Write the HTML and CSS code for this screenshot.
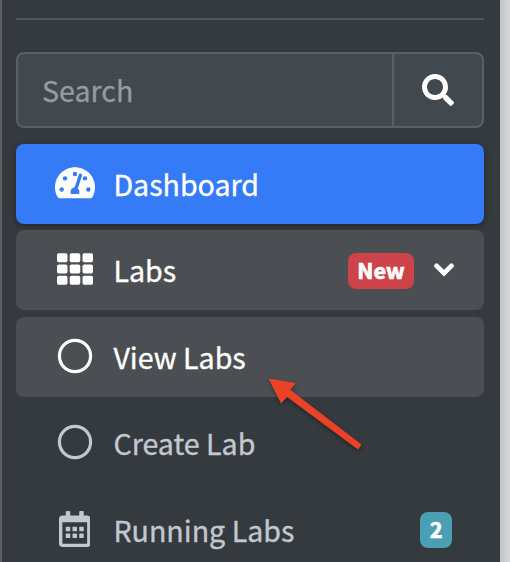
FILE: index.html
```html
<!DOCTYPE html>
<html lang="en">
<head>
<meta charset="utf-8">
<title>Dashboard</title>
<link rel="stylesheet" href="styles.css">
</head>
<body>
<aside class="sidebar">
  <hr class="divider">
  <form class="search">
    <input class="search-input" type="text" placeholder="Search" aria-label="Search">
    <button class="search-button" type="button" aria-label="Submit search">
      <svg width="32" height="32" viewBox="0 0 512 512" fill="#fff"><path d="M505 442.7L405.3 343c-4.5-4.5-10.6-7-17-7H372c27.6-35.3 44-79.7 44-128C416 93.1 322.9 0 208 0S0 93.1 0 208s93.1 208 208 208c48.3 0 92.7-16.4 128-44v16.3c0 6.4 2.5 12.5 7 17l99.7 99.7c9.4 9.4 24.6 9.4 33.9 0l28.3-28.3c9.4-9.4 9.4-24.6.1-34zM208 336c-70.7 0-128-57.2-128-128 0-70.7 57.2-128 128-128 70.7 0 128 57.2 128 128 0 70.7-57.2 128-128 128z"/></svg>
    </button>
  </form>
  <nav class="menu">
    <a class="item active">
      <span class="icon"><svg width="40" height="35.6" viewBox="0 0 576 512"><path fill="#fff" d="M288 32C129 32 0 161 0 320c0 53 14 102 39 145 6 9 16 15 27 15h444c11 0 21-6 27-15 25-43 39-92 39-145C576 161 447 32 288 32z"/><g fill="#357af6"><circle cx="96" cy="352" r="32"/><circle cx="144" cy="192" r="32"/><circle cx="288" cy="128" r="32"/><circle cx="432" cy="192" r="32"/><circle cx="480" cy="352" r="32"/><path d="M233 416c-6-9-9-20-9-32 0-34 26-61 59-64l60-181c10-29 54-15 46 15l-61 183c15 12 24 29 24 47 0 12-3 23-9 32z"/></g></svg></span>
      <span class="label">Dashboard</span>
    </a>
    <a class="item open">
      <span class="icon"><svg width="36" height="36" viewBox="0 0 512 512" fill="#fff"><rect y="32" width="149" height="128" rx="24"/><rect x="181" y="32" width="150" height="128" rx="24"/><rect x="363" y="32" width="149" height="128" rx="24"/><rect y="192" width="149" height="128" rx="24"/><rect x="181" y="192" width="150" height="128" rx="24"/><rect x="363" y="192" width="149" height="128" rx="24"/><rect y="352" width="149" height="128" rx="24"/><rect x="181" y="352" width="150" height="128" rx="24"/><rect x="363" y="352" width="149" height="128" rx="24"/></svg></span>
      <span class="label">Labs</span>
      <span class="badge new">New</span>
      <svg class="chevron" width="20" height="14" viewBox="0 0 20 14" fill="none" stroke="#fff" stroke-width="4.8" stroke-linecap="round" stroke-linejoin="miter"><path d="M2.6 2.9L10 10.1L17.4 2.9"/></svg>
    </a>
    <a class="item open view">
      <span class="icon"><svg width="36" height="36" viewBox="0 0 36 36"><circle cx="18" cy="18" r="15.6" fill="none" stroke="currentColor" stroke-width="3.2"/></svg></span>
      <span class="label">View Labs</span>
      <svg class="arrow" width="104" height="84" viewBox="0 0 104 84"><path fill="#eb4126" d="M4.5 5.5L31.5 10L26.5 17L97.5 71.5L94 76.5L23 24L17 30.5Z"/></svg>
    </a>
    <a class="item create">
      <span class="icon"><svg width="36" height="36" viewBox="0 0 36 36"><circle cx="18" cy="18" r="15.6" fill="none" stroke="currentColor" stroke-width="3.2"/></svg></span>
      <span class="label">Create Lab</span>
    </a>
    <a class="item running">
      <span class="icon"><svg width="31.5" height="36" viewBox="0 0 448 512" fill="currentColor"><path fill-rule="evenodd" d="M400 64h-48V12c0-7-5-12-12-12h-40c-7 0-12 5-12 12v52H160V12c0-7-5-12-12-12h-40c-7 0-12 5-12 12v52H48C21 64 0 86 0 112v352c0 26 21 48 48 48h352c27 0 48-22 48-48V112c0-26-21-48-48-48zM48 160h352v298c0 3-3 6-6 6H54c-3 0-6-3-6-6z"/><rect x="96" y="224" width="64" height="64" rx="12"/><rect x="192" y="224" width="64" height="64" rx="12"/><rect x="288" y="224" width="64" height="64" rx="12"/><rect x="96" y="320" width="64" height="64" rx="12"/><rect x="192" y="320" width="64" height="64" rx="12"/><rect x="288" y="320" width="64" height="64" rx="12"/></svg></span>
      <span class="label">Running Labs</span>
      <span class="badge count">2</span>
    </a>
  </nav>
</aside>
</body>
</html>
```
FILE: styles.css
```css
* { box-sizing: border-box; }
body {
  margin: 0;
  height: 562px;
  overflow: hidden;
  background: linear-gradient(to right, #c2c3c7 500px, #d7d8dc 510px);
  font-family: "Noto Sans CJK SC", "Open Sans", sans-serif;
}
.sidebar {
  width: 500px;
  height: 562px;
  overflow: hidden;
  padding: 18px 16px 0 14px;
  border-left: 2px solid #5c6064;
  background: #353a3e;
}
.divider {
  height: 2px;
  margin: 0 0 32px;
  border: 0;
  background: #4f575e;
}
.search {
  display: flex;
  height: 76px;
  margin: 0 0 16px;
  border: 2px solid #58606a;
  border-radius: 8px;
  background: #41484e;
  overflow: hidden;
}
.search-input {
  flex: 1;
  min-width: 0;
  padding: 0 24px;
  border: 0;
  background: transparent;
  font: 28.6px/40px "Noto Sans CJK SC", "Open Sans", sans-serif;
  -webkit-text-stroke: .3px #959ba3;
}
.search-input::placeholder { color: #959ba3; opacity: 1; }
.search-button {
  display: flex;
  align-items: center;
  justify-content: center;
  width: 90px;
  padding: 0;
  border: 0;
  border-left: 2px solid #58606a;
  background: transparent;
}
.menu { display: flex; flex-direction: column; }
.item {
  position: relative;
  display: flex;
  flex: none;
  align-items: center;
  height: 80px;
  margin-bottom: 6px;
  padding: 0 32px;
  border-radius: 8px;
  color: #c2c7d0;
}
.active {
  color: #fff;
  background: #357af6;
  box-shadow: 0 2px 6px rgba(0, 0, 0, .35);
}
.open { color: #fff; background: #4b4e52; margin-bottom: 7px; }
.view { margin-bottom: 6px; }
.create { margin-bottom: 7px; }
.icon {
  display: flex;
  justify-content: center;
  width: 53px;
  margin-right: 12.4px;
  padding-bottom: 2px;
}
.icon svg { display: block; }
.label {
  font-size: 28.6px;
  line-height: 40px;
  white-space: nowrap;
  -webkit-text-stroke: .35px currentColor;
}
.badge {
  height: 36px;
  margin-left: auto;
  border-radius: 8px;
  color: #fff;
  font-size: 21.6px;
  font-weight: 700;
  line-height: 34px;
  text-align: center;
  -webkit-text-stroke: .7px #fff;
}
.new { width: 66px; margin-top: 2px; background: #cc444a; }
.count { width: 32px; background: #4a9fb5; }
.chevron { margin: 0 -2px 1px 20px; }
.arrow {
  position: absolute;
  left: 248px;
  top: 56px;
  z-index: 1;
  filter: drop-shadow(0 2px 2px rgba(0, 0, 0, .35));
}
```
